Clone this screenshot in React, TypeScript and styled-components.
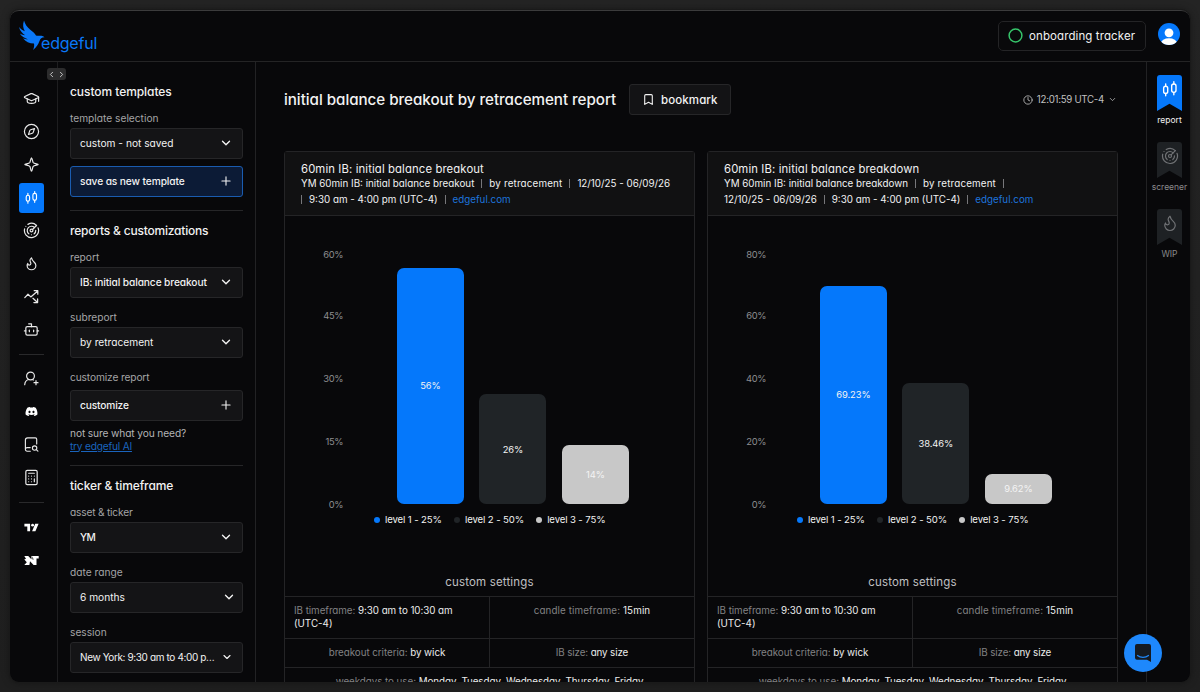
import React from "react";
import styled, { createGlobalStyle } from "styled-components";
import { GraduationCap, Compass, Radar, Flame, Bot, Calculator, ChevronDown, Plus, Bookmark, Clock, ChevronLeft, ChevronRight } from "lucide-react";
import { FaDiscord } from "react-icons/fa";

const Global = createGlobalStyle`
  * { box-sizing: border-box; }
  body { margin: 0; background: #222; overflow: hidden; }
`;

const Desktop = styled.div`
  width: 1200px;
  height: 692px;
  padding: 10px;
  background: linear-gradient(#242424, #1f1f1f);
  font-family: Inter, "Open Sans", sans-serif;
  font-feature-settings: "cv11";
  color: #f2f2f2;
`;

const Window = styled.div`
  width: 1180px;
  height: 672px;
  display: flex;
  flex-direction: column;
  overflow: hidden;
  border-radius: 9px;
  background: #08080a;
  box-shadow: 0 0 0 1px #1a1a1a, 0 0 8px rgba(0, 0, 0, 0.4);
  border-top: 1px solid #3b3b3c;
`;

const Text = styled.span<{ $size?: number; $weight?: number; $ls?: number; $color?: string }>`
  font-size: ${(p) => p.$size ?? 10.2}px;
  font-weight: ${(p) => p.$weight ?? 400};
  letter-spacing: ${(p) => p.$ls ?? 0}px;
  color: ${(p) => p.$color ?? "inherit"};
  white-space: nowrap;
`;

const Header = styled.header`
  height: 51px;
  flex: none;
  display: flex;
  align-items: center;
  justify-content: space-between;
  border-bottom: 1px solid #242425;
  padding: 0 10px 0 8px;
`;
const Logo = styled.div`
  display: flex;
  align-items: flex-start;
  height: 34px;
`;
const Wordmark = styled(Text)`
  margin: 14px 0 0 -4px;
  line-height: 20px;
`;
const HeaderRight = styled.div`
  display: flex;
  align-items: center;
  gap: 12px;
  margin-top: -4px;
`;
const Onboarding = styled.button`
  width: 148px;
  height: 30px;
  margin-top: 3px;
  display: flex;
  align-items: center;
  gap: 6px;
  padding: 0 0 0 9px;
  background: #09090b;
  border: 1px solid #242426;
  border-radius: 5px;
  color: #f2f2f2;
  font: inherit;
  font-feature-settings: inherit;
`;

const Body = styled.div`
  flex: 1;
  min-height: 0;
  display: flex;
`;
const Nav = styled.nav`
  position: relative;
  width: 48px;
  flex: none;
  border-right: 1px solid #1e1e20;
  padding: 22px 0 0 9px;
  display: flex;
  flex-direction: column;
`;
const NavItem = styled.div<{ $active?: boolean }>`
  width: 25px;
  height: 30px;
  margin-bottom: 3px;
  padding-bottom: 1px;
  display: flex;
  align-items: center;
  justify-content: center;
  border-radius: 3px;
  color: #e8e8e8;
  background: ${(p) => (p.$active ? "#0578fb" : "transparent")};
`;
const NavRule = styled.div<{ $mb?: number }>`
  width: 25px;
  height: 1px;
  margin: 6px 0 ${(p) => p.$mb ?? 9}px;
  background: #29292b;
`;
const Toggle = styled.div`
  position: absolute;
  left: 37px;
  top: 6px;
  width: 19px;
  height: 12px;
  border-radius: 3px;
  background: #2c2c2d;
  display: flex;
  align-items: center;
  justify-content: center;
  gap: 1px;
  color: #c8c8c8;
  z-index: 2;
`;

const Panel = styled.aside`
  width: 198px;
  flex: none;
  border-right: 1px solid #222224;
  padding: 0 12px;
  display: flex;
  flex-direction: column;
`;
const Line = styled.div<{ $h: number; $mt?: number }>`
  height: ${(p) => p.$h}px;
  margin-top: ${(p) => p.$mt ?? 0}px;
  flex: none;
  display: flex;
  align-items: center;
`;
const Field = styled.div<{ $mt?: number; $primary?: boolean; $pr?: number }>`
  width: 173px;
  height: 31px;
  flex: none;
  margin-top: ${(p) => p.$mt ?? 2}px;
  padding: 0 ${(p) => p.$pr ?? 9}px 1px 9px;
  display: flex;
  align-items: center;
  justify-content: space-between;
  border: 1px solid ${(p) => (p.$primary ? "#1a5cb0" : "#262628")};
  border-radius: 3px;
  background: ${(p) => (p.$primary ? "#0c1b36" : "#141416")};
`;
const Rule = styled.div<{ $mt: number }>`
  width: 173px;
  height: 1px;
  flex: none;
  margin-top: ${(p) => p.$mt}px;
  background: #262628;
`;
const Link = styled(Text)`
  text-decoration: underline;
`;

const Main = styled.main`
  flex: 1;
  min-width: 0;
  padding: 22px 29px 0 28px;
`;
const TitleRow = styled.div`
  height: 31px;
  display: flex;
  align-items: center;
  gap: 12px;
`;
const TitleBox = styled.div`
  width: 333px;
  padding-bottom: 2px;
`;
const BookmarkButton = styled.button`
  width: 102px;
  height: 31px;
  display: flex;
  align-items: center;
  gap: 6px;
  padding: 0 0 0 12px;
  background: #131315;
  border: 1px solid #262628;
  border-radius: 3px;
  color: #f4f4f4;
  font: inherit;
  font-feature-settings: inherit;
`;
const Clocked = styled.div`
  margin-left: auto;
  display: flex;
  align-items: center;
  gap: 4px;
  color: #c0c0c0;
`;
const Cards = styled.div`
  margin-top: 36px;
  display: flex;
  gap: 12px;
`;
const Card = styled.section`
  width: 411px;
  height: 560px;
  flex: none;
  border: 1px solid #242426;
  border-radius: 3px 3px 0 0;
  display: flex;
  flex-direction: column;
`;
const CardHead = styled.div`
  height: 64px;
  padding: 9px 16px 0;
  background: #111112;
  border-bottom: 1px solid #242426;
`;
const MetaLine = styled.div<{ $h: number }>`
  height: ${(p) => p.$h}px;
  display: flex;
  align-items: center;
`;
const Bar = styled.i`
  width: 1px;
  height: 9px;
  margin: 0 7px;
  background: #77777a;
  &:first-child { margin-left: 0; }
`;

const Chart = styled.div`
  height: 252px;
  margin-top: 36px;
  display: flex;
`;
const Axis = styled.div`
  width: 58px;
  margin-right: 54px;
  display: flex;
  flex-direction: column;
  align-items: flex-end;
  justify-content: space-between;
`;
const Tick = styled.div`
  height: 0;
  display: flex;
  align-items: center;
  &:first-child { transform: translateY(2px); }
`;
const Bars = styled.div`
  display: flex;
  align-items: flex-end;
  gap: 15.7px;
`;
const Column = styled.div<{ $fill: string }>`
  width: 66.8px;
  border-radius: 7px;
  background: ${(p) => p.$fill};
  display: flex;
  align-items: center;
  justify-content: center;
`;
const Legend = styled.div`
  margin: 7px 0 0 89px;
  height: 17px;
  display: flex;
  align-items: center;
  gap: 12.2px;
`;
const LegendItem = styled.div`
  display: flex;
  align-items: center;
  gap: 5px;
`;
const Dot = styled.i<{ $fill: string }>`
  width: 6px;
  height: 6px;
  border-radius: 50%;
  background: ${(p) => p.$fill};
`;
const SettingsTitle = styled.div`
  margin: 42px 0 2px;
  height: 24px;
  display: flex;
  align-items: center;
  justify-content: center;
`;
const Settings = styled.div`
  display: grid;
  grid-template-columns: 205px 204px;
  grid-template-rows: 42px 29px 30px;
`;
const Cell = styled.div<{ $left?: boolean; $wide?: boolean; $divide?: boolean }>`
  border-top: 1px solid #242426;
  border-right: ${(p) => (p.$divide ? "1px solid #242426" : "none")};
  grid-column: ${(p) => (p.$wide ? "1 / 3" : "auto")};
  padding: 8px 9px 0;
  font-size: 9.8px;
  line-height: 12.5px;
  text-align: ${(p) => (p.$left ? "left" : "center")};
  color: #828284;
`;

const Rail = styled.aside`
  width: 44px;
  flex: none;
  border-left: 1px solid #222224;
  padding: 13px 0 0 2px;
  display: flex;
  flex-direction: column;
  align-items: center;
`;
const RailItem = styled.div`
  height: 67px;
  display: flex;
  flex-direction: column;
  align-items: center;
  gap: 4px;
`;
const Flag = styled.div<{ $active?: boolean }>`
  width: 25px;
  height: 36px;
  border-radius: 3px 3px 0 0;
  clip-path: polygon(0 0, 100% 0, 100% 100%, 50% 80%, 0 100%);
  background: ${(p) => (p.$active ? "#0578fb" : "#1e2124")};
  color: ${(p) => (p.$active ? "#fff" : "#707275")};
  display: flex;
  justify-content: center;
  padding-top: 5px;
`;
const Chat = styled.div`
  position: absolute;
  left: 1124px;
  top: 634px;
  width: 38px;
  height: 38px;
  border-radius: 50%;
  background: #1e88fc;
  display: flex;
  align-items: center;
  justify-content: center;
`;

const Candles = ({ size = 15 }: { size?: number }) => (
  <svg width={size} height={size} viewBox="0 0 15 15" fill="none" stroke="#fff" strokeWidth="1.15" strokeLinecap="round">
    <rect x="2.2" y="5.2" width="3.4" height="6" rx="1.7" />
    <path d="M3.9 3.2v2M3.9 11.2v2" />
    <rect x="8.9" y="3.3" width="3.6" height="7" rx="1.7" />
    <path d="M10.7 1.5v1.8M10.7 10.3v2" />
  </svg>
);
const Sparkle = () => (
  <svg width="15" height="15" viewBox="0 0 15 15" fill="none" stroke="currentColor" strokeWidth="1.2" strokeLinejoin="round">
    <path d="M7.5.8C8.2.8 8.4 4.4 9.2 5.6 10.2 6.8 14.2 6.8 14.2 7.5S10.2 8.2 9.2 9.4C8.4 10.6 8.2 14.2 7.5 14.2S6.6 10.6 5.8 9.4C4.8 8.2.8 8.2.8 7.5S4.8 6.8 5.8 5.6C6.6 4.4 6.8.8 7.5.8Z" />
  </svg>
);
const Trend = () => (
  <svg width="15" height="15" viewBox="0 0 15 15" fill="none" stroke="currentColor" strokeWidth="1.25" strokeLinecap="round" strokeLinejoin="round">
    <path d="M.8 8.6 4 5.2l2.8 2.7 6.6-5.6M10.2 1.7h3.6v3.5M9 9.3l4.3 4M13.6 9.9v3.7h-3.7" />
  </svg>
);
const UserAdd = () => (
  <svg width="15" height="15" viewBox="0 0 15 15" fill="none" stroke="currentColor" strokeWidth="1.2" strokeLinecap="round">
    <circle cx="6.5" cy="5" r="3.9" />
    <path d="M.7 13.7C.9 11 2.6 9 4.7 8.5M8.3 8.5c.5.1.8.3 1.1.5M12 9.7v4M10 11.7h4" />
  </svg>
);
const BookSearch = () => (
  <svg width="15" height="15" viewBox="0 0 15 15" fill="none" stroke="currentColor" strokeWidth="1.15" strokeLinecap="round">
    <path d="M6.3 14.2H3.2C2 14.2 1.4 13.4 1.4 12.5V3C1.4 1.6 2.2.8 3.6.8h7.7c.9 0 1.4.5 1.4 1.4V7M1.4 12.2c0-1 .8-1.6 1.8-1.6h3" />
    <circle cx="10.6" cy="11" r="2.2" />
    <path d="m12.3 12.7 1.6 1.5" />
  </svg>
);
const TradingView = () => (
  <svg width="15" height="9" viewBox="0 0 15 9" fill="#fff">
    <path d="M.4.8h5.7v7.4H3.3V3.6H.4zM11.2.8h3.4L11.4 8.2H8.1z" />
    <circle cx="8.6" cy="2.2" r="1.4" />
  </svg>
);
const Ninja = () => (
  <svg width="15" height="11" viewBox="0 0 15 11" fill="#fff">
    <path d="M.3 1h3.900l3.200 3.300V1h7.300v2.600h-2.200V10H9.600L6 6.200 5.400 10H.3l2.500-2.800L.3 4.400l1.700-.6z" />
    <path d="M8.300 1.800v2.300h1.500" fill="none" stroke="#08080a" strokeWidth=".6" />
  </svg>
);
const Bird = () => (
  <svg width="27" height="32" viewBox="0 0 27 32" fill="#0a78f8">
    <path d="M6 1.5C7 5 9 8 12 10.5C14.5 12.5 16.5 14 18 16.5C20 17 24 16 26.5 18.3C23.5 18.5 22.5 19.5 21.5 22C20.3 25.3 18.3 28.500 15 31C16.200 28.500 16.400 26.300 16 24.500C11.500 24.500 7.500 22.700 5 19.200C7 20 8.500 20.300 10 20.200C6.500 19 3.500 17.500 1.800 14.500C3.800 15.700 5.500 16.200 7.200 16.200C4.300 14.200 2 12 1 8C3 10.200 4.800 11.500 6.800 12.300C5 9 4.500 5.500 6 1.500Z" />
  </svg>
);
const Avatar = () => (
  <svg width="22" height="22" viewBox="0 0 22 22">
    <defs><clipPath id="avatar-disc"><circle cx="11" cy="11" r="11" /></clipPath></defs>
    <g clipPath="url(#avatar-disc)">
      <rect width="22" height="22" fill="#0578fb" />
      <circle cx="11" cy="9.8" r="4.4" fill="#fff" />
      <ellipse cx="11" cy="20" rx="8" ry="4.7" fill="#fff" />
    </g>
  </svg>
);

type FieldProps = { label: string; ls?: number; size?: number; weight?: number; plus?: boolean; primary?: boolean; mt?: number; pr?: number; chevron?: number };
const Select = ({ label, ls, size, weight = 400, plus, primary, mt, pr, chevron = 14 }: FieldProps) => (
  <Field $mt={mt} $primary={primary} $pr={pr}>
    <Text $ls={ls} $size={size} $weight={weight}>{label}</Text>
    {plus ? <Plus size={14} strokeWidth={1.9} /> : <ChevronDown size={chevron} strokeWidth={2.3} />}
  </Field>
);
const grey = "#a4a4a6";

type Report = { title: string; meta: string[][]; ticks: string[]; max: number; values: { v: number; label: string }[] };
const reports: Report[] = [
  {
    title: "60min IB: initial balance breakout",
    meta: [["YM 60min IB: initial balance breakout", "|", "by retracement", "|", "12/10/25 - 06/09/26"], ["|", "9:30 am - 4:00 pm (UTC-4)", "|", "edgeful.com"]],
    ticks: ["60%", "45%", "30%", "15%", "0%"],
    max: 60,
    values: [{ v: 56.2, label: "56%" }, { v: 26.1, label: "26%" }, { v: 14, label: "14%" }],
  },
  {
    title: "60min IB: initial balance breakdown",
    meta: [["YM 60min IB: initial balance breakdown", "|", "by retracement", "|"], ["12/10/25 - 06/09/26", "|", "9:30 am - 4:00 pm (UTC-4)", "|", "edgeful.com"]],
    ticks: ["80%", "60%", "40%", "20%", "0%"],
    max: 80,
    values: [{ v: 69.23, label: "69.23%" }, { v: 38.46, label: "38.46%" }, { v: 9.62, label: "9.62%" }],
  },
];
const fills = ["#0578fb", "#202427", "#c8c8c8"];
const legend = ["level 1 - 25%", "level 2 - 50%", "level 3 - 75%"];

const Setting = ({ name, value, ls = -0.05 }: { name: string; value: string; ls?: number }) => (
  <>
    <Text $size={9.8} $ls={ls}>{name} </Text>
    <Text $size={9.8} $ls={ls} $color="#ececec">{value}</Text>
  </>
);

const ReportCard = ({ r }: { r: Report }) => (
  <Card>
    <CardHead>
      <MetaLine $h={16}><Text $size={11.3} $ls={0.12}>{r.title}</Text></MetaLine>
      {r.meta.map((line, i) => (
        <MetaLine $h={i ? 18 : 13} key={i}>
          {line.map((s, j) =>
            s === "|" ? <Bar key={j} /> : (
              <Text key={j} $size={9.8} $ls={s === "by retracement" ? 0.17 : 0} $color={s === "edgeful.com" ? "#1d74dc" : undefined}>{s}</Text>
            ),
          )}
        </MetaLine>
      ))}
    </CardHead>
    <Chart>
      <Axis>{r.ticks.map((t) => <Tick key={t}><Text $size={9.4} $ls={-0.4} $color="#8e8e90">{t}</Text></Tick>)}</Axis>
      <Bars>
        {r.values.map((b, i) => (
          <Column key={i} $fill={fills[i]} style={{ height: (b.v / r.max) * 252 }}>
            <Text $size={9.4} $ls={-0.1} $color="#f4f4f4">{b.label}</Text>
          </Column>
        ))}
      </Bars>
    </Chart>
    <Legend>{legend.map((l, i) => <LegendItem key={l}><Dot $fill={fills[i]} /><Text $size={9.6} $ls={-0.12}>{l}</Text></LegendItem>)}</Legend>
    <SettingsTitle><Text $size={11.5} $ls={0.15} $color="#c0c0c2">custom settings</Text></SettingsTitle>
    <Settings>
      <Cell $left $divide>
        <Setting name="IB timeframe:" value="9:30 am to 10:30 am" /><br />
        <Text $size={9.8} $color="#ececec">(UTC-4)</Text>
      </Cell>
      <Cell><Setting name="candle timeframe:" value="15min" ls={0.12} /></Cell>
      <Cell $divide><Setting name="breakout criteria:" value="by wick" /></Cell>
      <Cell><Setting name="IB size:" value="any size" ls={-0.12} /></Cell>
      <Cell $wide><Setting name="weekdays to use:" value="Monday, Tuesday, Wednesday, Thursday, Friday" /></Cell>
    </Settings>
  </Card>
);

export default function App() {
  return (
    <Desktop>
      <Global />
      <Window>
        <Header>
          <Logo><Bird /><Wordmark $size={16} $ls={-0.2} $color="#0a78f8">edgeful</Wordmark></Logo>
          <HeaderRight>
            <Onboarding>
              <svg width="15" height="15" viewBox="0 0 15 15"><circle cx="7.5" cy="7.5" r="6.4" fill="none" stroke="#36c46a" strokeWidth="1.5" /></svg>
              <Text $size={11.5} $ls={0.1}>onboarding tracker</Text>
            </Onboarding>
            <Avatar />
          </HeaderRight>
        </Header>
        <Body>
          <Nav>
            <Toggle><ChevronLeft size={9} strokeWidth={2.6} /><ChevronRight size={9} strokeWidth={2.6} /></Toggle>
            <NavItem><GraduationCap size={17} strokeWidth={1.7} /></NavItem>
            <NavItem><Compass size={17} strokeWidth={1.7} /></NavItem>
            <NavItem><Sparkle /></NavItem>
            <NavItem $active><Candles /></NavItem>
            <NavItem><Radar size={17} strokeWidth={1.7} /></NavItem>
            <NavItem><Flame size={15} strokeWidth={1.9} /></NavItem>
            <NavItem><Trend /></NavItem>
            <NavItem><Bot size={17} strokeWidth={1.7} /></NavItem>
            <NavRule />
            <NavItem><UserAdd /></NavItem>
            <NavItem><FaDiscord size={13} color="#fff" /></NavItem>
            <NavItem><BookSearch /></NavItem>
            <NavItem><Calculator size={17} strokeWidth={1.7} /></NavItem>
            <NavRule $mb={10} />
            <NavItem><TradingView /></NavItem>
            <NavItem><Ninja /></NavItem>
          </Nav>
          <Panel>
            <Line $h={20} $mt={19}><Text $size={12} $ls={-0.06} $weight={500}>custom templates</Text></Line>
            <Line $h={16} $mt={9}><Text $color={grey}>template selection</Text></Line>
            <Select mt={2} label="custom - not saved" />
            <Select mt={7} label="save as new template" plus primary weight={500} ls={-0.1} />
            <Rule $mt={13} />
            <Line $h={20} $mt={9}><Text $size={12} $ls={-0.2} $weight={500}>reports &amp; customizations</Text></Line>
            <Line $h={16} $mt={9}><Text $color={grey}>report</Text></Line>
            <Select label="IB: initial balance breakout" weight={500} ls={-0.11} />
            <Line $h={16} $mt={11}><Text $color={grey}>subreport</Text></Line>
            <Select label="by retracement" />
            <Line $h={16} $mt={11}><Text $ls={-0.13} $color={grey}>customize report</Text></Line>
            <Select mt={5} label="customize" plus weight={500} ls={-0.15} />
            <Line $h={13} $mt={5}><Text $ls={-0.12} $color="#b4b4b6">not sure what you need?</Text></Line>
            <Line $h={13}><Link $ls={-0.23} $color="#1a64bd">try edgeful AI</Link></Line>
            <Rule $mt={13} />
            <Line $h={20} $mt={9}><Text $size={12} $ls={-0.12} $weight={500}>ticker &amp; timeframe</Text></Line>
            <Line $h={16} $mt={9}><Text $ls={-0.2} $color={grey}>asset &amp; ticker</Text></Line>
            <Select label="YM" weight={500} ls={-0.6} />
            <Line $h={16} $mt={11}><Text $color={grey}>date range</Text></Line>
            <Select label="6 months" pr={6} />
            <Line $h={16} $mt={11}><Text $color={grey}>session</Text></Line>
            <Select label="New York: 9:30 am to 4:00 p…" chevron={12} size={10} ls={-0.38} />
          </Panel>
          <Main>
            <TitleRow>
              <TitleBox><Text $size={15.2} $ls={-0.045} $weight={500}>initial balance breakout by retracement report</Text></TitleBox>
              <BookmarkButton><Bookmark size={13} strokeWidth={2} /><Text $size={11.5} $ls={0.1} $weight={500}>bookmark</Text></BookmarkButton>
              <Clocked><Clock size={10} /><Text $size={9.7} $ls={-0.28}>12:01:59 UTC-4</Text><ChevronDown size={9} /></Clocked>
            </TitleRow>
            <Cards>{reports.map((r) => <ReportCard key={r.title} r={r} />)}</Cards>
          </Main>
          <Rail>
            <RailItem><Flag $active><Candles size={18} /></Flag><Text $size={8.5}>report</Text></RailItem>
            <RailItem><Flag><Radar size={18} strokeWidth={1.6} /></Flag><Text $size={8.5} $color="#8a8a8c">screener</Text></RailItem>
            <RailItem><Flag><Flame size={18} strokeWidth={1.6} /></Flag><Text $size={8.5} $color="#8a8a8c">WIP</Text></RailItem>
          </Rail>
        </Body>
      </Window>
      <Chat>
        <svg width="18" height="20" viewBox="0 0 18 20">
          <path d="M3 1h12a2 2 0 0 1 2 2v16l-4-2.2H3A2 2 0 0 1 1 15V3a2 2 0 0 1 2-2z" fill="#151a22" />
          <path d="M3.5 12.5c3 2.4 8 2.4 11 0" fill="none" stroke="#1e88fc" strokeWidth="1.2" strokeLinecap="round" />
        </svg>
      </Chat>
    </Desktop>
  );
}
